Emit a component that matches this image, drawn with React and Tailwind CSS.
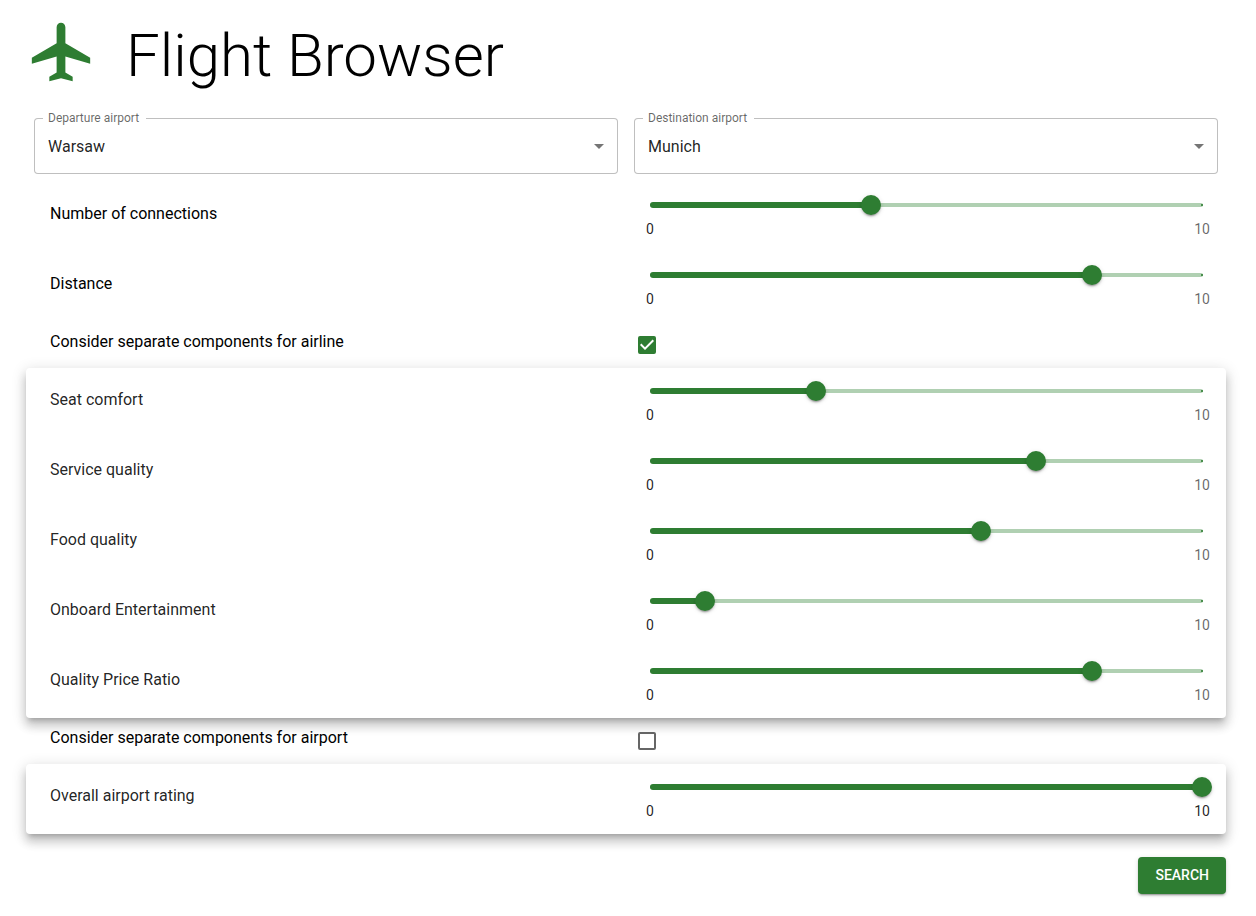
import { useId, useState } from "react";

const AIRPORTS = ["Warsaw", "Munich", "London", "Paris", "Madrid"];

function PlaneIcon() {
  return (
    <svg viewBox="0 0 24 24" className="size-[70px] shrink-0 fill-[#2e7d32]" aria-hidden="true">
      <path d="M22 16v-2l-8.5-5V3.5c0-.83-.67-1.5-1.5-1.5s-1.5.67-1.5 1.5V9L2 14v2l8.5-2.5V19L8 20.5V22l4-1 4 1v-1.5L13.5 19v-5.5L22 16z" />
    </svg>
  );
}

function AirportSelect({ label, initial }) {
  const id = useId();
  const [value, setValue] = useState(initial);
  return (
    <div className="relative grid items-center">
      <select
        id={id}
        value={value}
        onChange={(e) => setValue(e.target.value)}
        className="col-start-1 row-start-1 h-14 w-full cursor-pointer appearance-none rounded border border-black/25 bg-white pt-0.5 pl-[13px] pr-8 text-base text-black/87 outline-none focus:border-[#2e7d32]"
      >
        {AIRPORTS.map((a) => (
          <option key={a}>{a}</option>
        ))}
      </select>
      <svg
        viewBox="0 0 24 24"
        className="pointer-events-none col-start-1 row-start-1 mr-[7px] size-6 justify-self-end fill-black/54"
        aria-hidden="true"
      >
        <path d="M7 10l5 5 5-5z" />
      </svg>
      <label
        htmlFor={id}
        className="absolute -top-2 left-[9px] bg-white pr-[7px] pl-[5px] text-xs leading-4 text-black/60"
      >
        {label}
      </label>
    </div>
  );
}

function SliderRow({ label, initial }) {
  const id = useId();
  const [value, setValue] = useState(initial);
  return (
    <div className="grid h-[70px] grid-cols-2">
      <label htmlFor={id} className="px-6 pt-5 text-base leading-6">
        {label}
      </label>
      <div className="px-6 pt-[13px]">
        <div className="grid items-center">
          <div className="col-start-1 row-start-1 -mr-px flex h-1 items-center justify-end rounded-full bg-[#b0d0b2]">
            <span className="size-0.5 bg-[#2e7d32]/80" />
          </div>
          <div
            className="col-start-1 row-start-1 h-1.5 rounded-full bg-[#2e7d32]"
            style={{ width: `${value * 10}%` }}
          />
          <input
            id={id}
            type="range"
            min="0"
            max="10"
            value={value}
            onChange={(e) => setValue(Number(e.target.value))}
            className="col-start-1 row-start-1 -mx-2.5 h-5 cursor-pointer appearance-none bg-transparent outline-none [&::-webkit-slider-thumb]:size-5 [&::-webkit-slider-thumb]:appearance-none [&::-webkit-slider-thumb]:rounded-full [&::-webkit-slider-thumb]:bg-[#2e7d32] [&::-webkit-slider-thumb]:shadow-[0_3px_1px_-2px_rgba(0,0,0,0.2),0_2px_2px_0_rgba(0,0,0,0.14),0_1px_5px_0_rgba(0,0,0,0.12)]"
          />
        </div>
        <div className="-mx-2 mt-1 flex justify-between text-sm leading-5">
          <span className="w-4 text-center text-black/87">0</span>
          <span className={value === 10 ? "text-black/87" : "text-black/60"}>10</span>
        </div>
      </div>
    </div>
  );
}

function CheckRow({ label, initial }) {
  const id = useId();
  const [checked, setChecked] = useState(initial);
  return (
    <div className="grid h-[46px] grid-cols-2">
      <label htmlFor={id} className="px-6 pt-2 text-base leading-6">
        {label}
      </label>
      <div className="grid justify-start px-3 pt-3.5">
        <input
          id={id}
          type="checkbox"
          checked={checked}
          onChange={(e) => setChecked(e.target.checked)}
          className="peer col-start-1 row-start-1 size-[18px] cursor-pointer appearance-none rounded-xs border-2 border-black/60 checked:border-[#2e7d32] checked:bg-[#2e7d32]"
        />
        <svg
          viewBox="3 3 18 18"
          className="pointer-events-none invisible col-start-1 row-start-1 size-[18px] fill-white peer-checked:visible"
          aria-hidden="true"
        >
          <path d="M10 17l-5-5 1.41-1.41L10 14.17l7.59-7.59L19 8l-9 9z" />
        </svg>
      </div>
    </div>
  );
}

function Paper({ children }) {
  return (
    <section className="rounded bg-white text-black/87 shadow-[0_5px_5px_-3px_rgba(0,0,0,0.2),0_8px_10px_1px_rgba(0,0,0,0.14),0_3px_14px_2px_rgba(0,0,0,0.12)]">
      {children}
    </section>
  );
}

export default function App() {
  return (
    <main className="bg-white pt-[17px] pb-5 pl-[26px] pr-[30px] font-[Roboto,sans-serif] text-black">
      <header className="flex items-start gap-[30px]">
        <PlaneIcon />
        <h1 className="text-[60px] leading-[78px] font-light">Flight Browser</h1>
      </header>
      <form onSubmit={(e) => e.preventDefault()}>
        <div className="mt-[15px] grid grid-cols-2 gap-4 p-2">
          <AirportSelect label="Departure airport" initial="Warsaw" />
          <AirportSelect label="Destination airport" initial="Munich" />
        </div>
        <SliderRow label="Number of connections" initial={4} />
        <SliderRow label="Distance" initial={8} />
        <CheckRow label="Consider separate components for airline" initial={true} />
        <Paper>
          <SliderRow label="Seat comfort" initial={3} />
          <SliderRow label="Service quality" initial={7} />
          <SliderRow label="Food quality" initial={6} />
          <SliderRow label="Onboard Entertainment" initial={1} />
          <SliderRow label="Quality Price Ratio" initial={8} />
        </Paper>
        <CheckRow label="Consider separate components for airport" initial={false} />
        <Paper>
          <SliderRow label="Overall airport rating" initial={10} />
        </Paper>
        <div className="mt-[23px] flex justify-end">
          <button
            type="submit"
            className="cursor-pointer rounded bg-[#2e7d32] px-[17px] py-1.5 text-sm leading-[25px] font-medium text-white uppercase shadow-[0_3px_1px_-2px_rgba(0,0,0,0.2),0_2px_2px_0_rgba(0,0,0,0.14),0_1px_5px_0_rgba(0,0,0,0.12)]"
          >
            Search
          </button>
        </div>
      </form>
    </main>
  );
}
